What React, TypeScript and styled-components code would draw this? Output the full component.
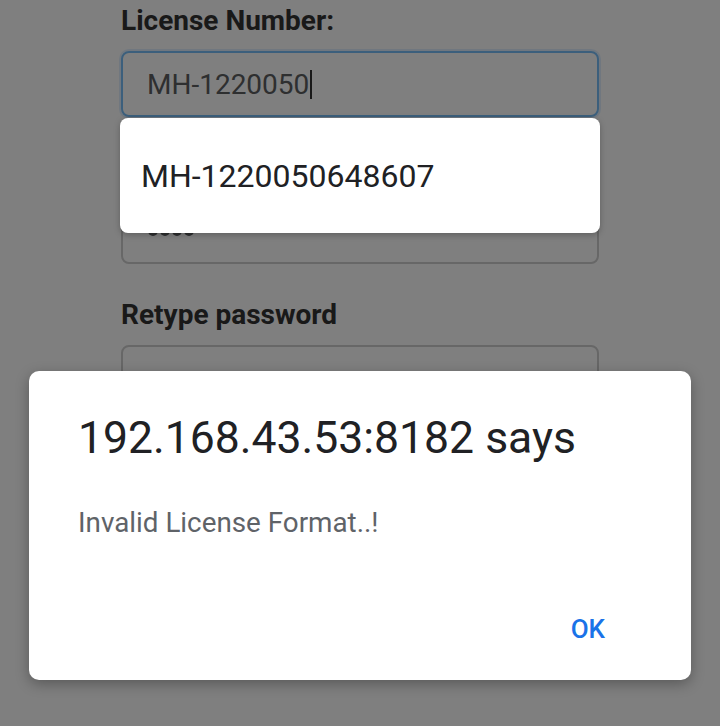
import React from 'react';
import styled, { createGlobalStyle } from 'styled-components';

const GlobalStyle = createGlobalStyle`
  html, body {
    margin: 0;
    padding: 0;
    background: #ffffff;
  }
  body {
    font-family: Roboto, "Noto Sans", "Liberation Sans", sans-serif;
    -webkit-font-smoothing: antialiased;
  }
`;

const Screen = styled.div`
  position: relative;
  width: 720px;
  height: 726px;
  overflow: hidden;
  background: #ffffff;
`;

const Form = styled.form`
  width: 478px;
  margin: 0 auto;
  padding-top: 4px;
  display: flex;
  flex-direction: column;
  gap: 34px;
`;

const Field = styled.div`
  display: flex;
  flex-direction: column;
  gap: 14px;
`;

const Label = styled.label`
  display: block;
  height: 33px;
  font-size: 28px;
  font-weight: 700;
  line-height: 33px;
  color: #333333;
`;

const InputWrap = styled.div`
  position: relative;
`;

const InputBox = styled.div<{ $focused?: boolean }>`
  box-sizing: border-box;
  height: 66px;
  display: flex;
  align-items: center;
  padding: 0 24px;
  border: 2px solid ${props => (props.$focused ? '#78bef8' : '#cecece')};
  border-radius: 8px;
  box-shadow: ${props => (props.$focused ? '0 0 0 2px rgba(0, 123, 255, 0.12)' : 'none')};
  font-size: 28px;
  color: #5c5e61;
`;

const Caret = styled.span`
  display: inline-block;
  width: 2px;
  height: 29px;
  margin-left: 1px;
  background: #333333;
`;

const Dots = styled.div`
  display: flex;
  gap: 2px;
  padding-left: 1px;
`;

const Dot = styled.span`
  width: 10px;
  height: 10px;
  border-radius: 50%;
  background: #5c5e61;
`;

const Suggestions = styled.ul`
  position: absolute;
  z-index: 20;
  top: calc(100% + 1px);
  left: -1px;
  right: -1px;
  margin: 0;
  padding: 0;
  list-style: none;
  background: #ffffff;
  border-radius: 8px;
  box-shadow: 0 2px 6px rgba(0, 0, 0, 0.25);
`;

const Suggestion = styled.li`
  height: 115px;
  display: flex;
  align-items: center;
  padding-left: 21px;
  font-size: 32px;
  color: #202124;
`;

const Overlay = styled.div`
  position: absolute;
  inset: 0;
  z-index: 10;
  box-sizing: border-box;
  padding-top: 371px;
  display: flex;
  justify-content: center;
  align-items: flex-start;
  background: rgba(0, 0, 0, 0.5);
`;

const Dialog = styled.div`
  box-sizing: border-box;
  width: 662px;
  height: 309px;
  padding: 40px 86px 35px 49px;
  display: flex;
  flex-direction: column;
  background: #ffffff;
  border-radius: 10px;
  box-shadow: 0 4px 14px rgba(0, 0, 0, 0.3);
`;

const Title = styled.h2`
  margin: 0;
  font-size: 44.5px;
  font-weight: 400;
  line-height: 54px;
  color: #202124;
`;

const Message = styled.p`
  margin: 42px 0 0;
  font-size: 27.8px;
  line-height: 32px;
  color: #5f6368;
`;

const Actions = styled.div`
  margin-top: auto;
  display: flex;
  justify-content: flex-end;
`;

const OkButton = styled.button`
  padding: 0;
  border: none;
  background: none;
  font-family: inherit;
  font-size: 26px;
  font-weight: 500;
  line-height: 31px;
  color: #1a73e8;
`;

const PasswordMask: React.FC<{ count: number }> = ({ count }) => (
  <Dots>
    {Array.from({ length: count }).map((_, i) => (
      <Dot key={i} />
    ))}
  </Dots>
);

const App: React.FC = () => {
  return (
    <Screen>
      <GlobalStyle />
      <Form>
        <Field>
          <Label>License Number:</Label>
          <InputWrap>
            <InputBox $focused>
              MH-1220050
              <Caret />
            </InputBox>
            <Suggestions>
              <Suggestion>MH-1220050648607</Suggestion>
            </Suggestions>
          </InputWrap>
        </Field>
        <Field>
          {/* label sits under the autofill popup */}
          <Label aria-label="Password" />
          <InputWrap>
            <InputBox>
              <PasswordMask count={4} />
            </InputBox>
          </InputWrap>
        </Field>
        <Field>
          <Label>Retype password</Label>
          <InputWrap>
            <InputBox>
              <PasswordMask count={8} />
            </InputBox>
          </InputWrap>
        </Field>
      </Form>
      <Overlay>
        <Dialog role="alertdialog">
          <Title>192.168.43.53:8182 says</Title>
          <Message>Invalid License Format..!</Message>
          <Actions>
            <OkButton type="button">OK</OkButton>
          </Actions>
        </Dialog>
      </Overlay>
    </Screen>
  );
};

export default App;
